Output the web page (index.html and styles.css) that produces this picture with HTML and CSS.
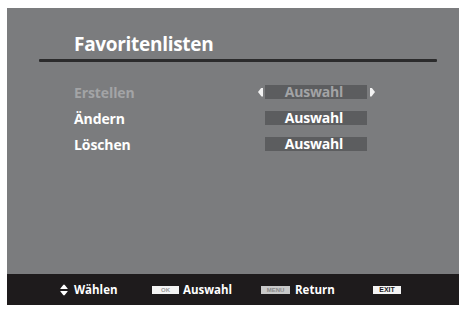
FILE: index.html
```html
<!DOCTYPE html>
<html>
<head>
<meta charset="utf-8">
<link rel="stylesheet" href="styles.css">
</head>
<body>
<div class="screen">
  <div class="content">
    <h1 class="title">Favoritenlisten</h1>
    <div class="rule"></div>
    <div class="rows">
      <div class="row disabled">
        <span class="label">Erstellen</span>
        <span class="value-wrap">
          <span class="arrow left"></span>
          <span class="value">Auswahl</span>
          <span class="arrow right"></span>
        </span>
      </div>
      <div class="row">
        <span class="label">Ändern</span>
        <span class="value-wrap">
          <span class="arrow-space"></span>
          <span class="value">Auswahl</span>
          <span class="arrow-space"></span>
        </span>
      </div>
      <div class="row">
        <span class="label">Löschen</span>
        <span class="value-wrap">
          <span class="arrow-space"></span>
          <span class="value">Auswahl</span>
          <span class="arrow-space"></span>
        </span>
      </div>
    </div>
  </div>
  <div class="footer">
    <div class="hint hint-nav">
      <svg class="updown" width="8" height="12" viewBox="0 0 8 12"><path d="M4 0.5 Q4.4 0.5 4.8 1 L7.6 4.4 Q8 5 7.3 5 L0.7 5 Q0 5 0.4 4.4 L3.2 1 Q3.6 0.5 4 0.5 Z M0.7 7 L7.3 7 Q8 7 7.6 7.6 L4.8 11 Q4 11.8 3.2 11 L0.4 7.6 Q0 7 0.7 7 Z" fill="#ffffff"/></svg>
      <span>Wählen</span>
    </div>
    <div class="hint hint-ok">
      <span class="key key-ok">OK</span>
      <span>Auswahl</span>
    </div>
    <div class="hint hint-menu">
      <span class="key key-menu">MENU</span>
      <span>Return</span>
    </div>
    <div class="hint">
      <span class="key key-exit">EXIT</span>
    </div>
  </div>
</div>
</body>
</html>
```
FILE: styles.css
```css
html, body {
  margin: 0;
  padding: 0;
  background: #ffffff;
}
body {
  font-family: "Open Sans", Lato, sans-serif;
}
.screen {
  margin: 8px 3px 0 7px;
  width: 452px;
  height: 297px;
  display: flex;
  flex-direction: column;
  background: #7b7c7e;
}
.content {
  flex: 1;
  padding-top: 24px;
}
.title {
  margin: 0 0 0 67px;
  font-size: 19px;
  line-height: 24px;
  font-weight: 700;
  color: #ffffff;
  letter-spacing: -0.3px;
}
.rule {
  margin: 3px 0 0 32px;
  width: 398px;
  height: 3px;
  background: #2b2b2c;
  border-radius: 1px;
}
.rows {
  margin-top: 17px;
  padding-left: 67px;
  display: flex;
  flex-direction: column;
}
.row {
  height: 26px;
  display: flex;
  align-items: center;
}
.label {
  width: 184px;
  font-size: 14px;
  font-weight: 700;
  color: #ffffff;
  letter-spacing: -0.1px;
}
.row.disabled .label,
.row.disabled .value {
  color: #a3a4a6;
}
.value-wrap {
  display: flex;
  align-items: center;
}
.arrow, .arrow-space {
  width: 5px;
  height: 9px;
}
.arrow {
  background: #f2f2f2;
}
.arrow.left {
  clip-path: polygon(0 50%, 70% 0, 100% 0, 100% 100%, 70% 100%);
  margin-right: 2px;
}
.arrow.right {
  clip-path: polygon(0 0, 30% 0, 100% 50%, 30% 100%, 0 100%);
  margin-left: 3px;
}
.arrow-space:first-child {
  margin-right: 2px;
}
.arrow-space:last-child {
  margin-left: 3px;
}
.value {
  width: 102px;
  height: 14px;
  background: #5c5d5f;
  color: #ffffff;
  font-size: 14px;
  font-weight: 700;
  line-height: 14px;
  text-align: center;
  text-indent: -4px;
  letter-spacing: -0.2px;
}
.footer {
  height: 31px;
  background: #1e1b1c;
  display: flex;
  align-items: center;
  padding-left: 53px;
  color: #ffffff;
  font-size: 11.5px;
  font-weight: 700;
}
.hint {
  display: flex;
  align-items: center;
}
.hint-nav {
  width: 92px;
  gap: 6px;
}
.hint-ok {
  width: 109px;
  gap: 4px;
}
.hint-menu {
  width: 112px;
  gap: 5px;
}
.key {
  display: inline-block;
  height: 8px;
  font-size: 6px;
  line-height: 8px;
  text-align: center;
  font-weight: 700;
  font-family: "Liberation Sans", sans-serif;
}
.key-ok {
  width: 27px;
  background: #f4f4f4;
  color: #9a9a9a;
}
.key-menu {
  width: 29px;
  background: #c9c9c9;
  color: #8a8a8a;
}
.key-exit {
  width: 28px;
  height: 8px;
  line-height: 8px;
  background: #f4f4f4;
  color: #1e1b1c;
  font-size: 7px;
}
```
